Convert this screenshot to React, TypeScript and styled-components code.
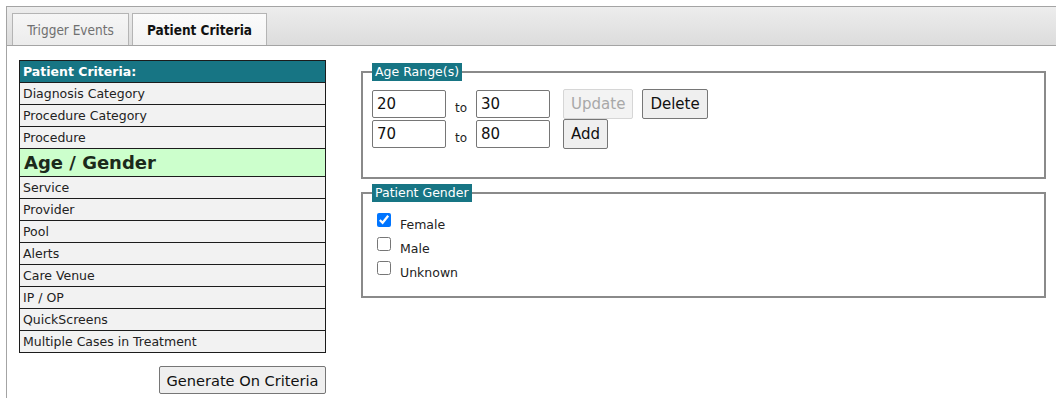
import React from 'react';
import styled, { createGlobalStyle } from 'styled-components';

const GlobalStyle = createGlobalStyle`
  html, body {
    margin: 0;
    background: #fff;
  }
  body {
    font-family: 'DejaVu Sans', Verdana, sans-serif;
    color: #222;
  }
`;

const teal = '#177584';

const Page = styled.div`
  box-sizing: border-box;
  height: 398px;
  padding: 6px 0 0 6px;
  overflow: hidden;
`;

const Panel = styled.div`
  height: 100%;
  border-top: 1px solid #a4a4a4;
  border-left: 1px solid #a4a4a4;
`;

const TabBar = styled.div`
  display: flex;
  align-items: flex-end;
  gap: 3px;
  box-sizing: border-box;
  height: 39px;
  padding-left: 5px;
  background: linear-gradient(#ededed, #dcdcdc);
  border-bottom: 1px solid #a4a4a4;
`;

const Tab = styled.div<{ $active?: boolean; $width: number }>`
  display: flex;
  align-items: center;
  justify-content: center;
  box-sizing: border-box;
  width: ${p => p.$width}px;
  height: 32px;
  border: 1px solid #b4b4b4;
  border-bottom: none;
  background: ${p => (p.$active ? 'linear-gradient(#fbfbfb, #f3f3f3)' : 'linear-gradient(#f6f6f6, #ececec)')};
  font-family: 'DejaVu Sans Condensed', 'DejaVu Sans', sans-serif;
  font-size: 13.5px;
  font-weight: ${p => (p.$active ? 700 : 400)};
  color: ${p => (p.$active ? '#111' : '#707070')};
`;

const Content = styled.div`
  display: flex;
  align-items: flex-start;
  gap: 35px;
  padding: 14px 10px 0 12px;
`;

const LeftColumn = styled.div`
  display: flex;
  flex-direction: column;
  align-items: flex-end;
  width: 307px;
  flex: none;
`;

const CriteriaList = styled.div`
  align-self: stretch;
  border: 1px solid #1c1c1c;
`;

const ListHeader = styled.div`
  height: 21px;
  line-height: 21px;
  padding-left: 3px;
  background: ${teal};
  color: #fff;
  font-size: 12.5px;
  font-weight: 700;
`;

const ListItem = styled.div<{ $selected?: boolean }>`
  height: ${p => (p.$selected ? 27 : 21)}px;
  line-height: ${p => (p.$selected ? 27 : 21)}px;
  padding-left: ${p => (p.$selected ? 4 : 3)}px;
  border-top: 1px solid #1c1c1c;
  background: ${p => (p.$selected ? '#ccffcc' : '#f2f2f2')};
  font-size: ${p => (p.$selected ? 18 : 12.5)}px;
  font-weight: ${p => (p.$selected ? 700 : 400)};
  color: ${p => (p.$selected ? '#1b2a1b' : '#222')};
  white-space: nowrap;
`;

const Button = styled.button<{ $height?: number }>`
  box-sizing: border-box;
  height: ${p => p.$height ?? 30}px;
  padding: 0 7px;
  border: 1px solid #767676;
  border-radius: 2px;
  background: #efefef;
  color: #111;
  font-family: 'DejaVu Sans', Verdana, sans-serif;
  font-size: 15px;
  white-space: nowrap;

  &:disabled {
    border-color: #d6d6d6;
    background: #f3f3f3;
    color: #a8a8a8;
  }
`;

const GenerateButton = styled(Button)`
  width: 167px;
  margin-top: 13px;
  padding: 0;
  font-size: 14.6px;
`;

const RightColumn = styled.div`
  flex: 1;
  display: flex;
  flex-direction: column;
  gap: 5px;
  padding-top: 3px;
`;

const Group = styled.fieldset<{ $bottom: number }>`
  margin: 0;
  padding: 8px 9px ${p => p.$bottom}px 9px;
  border: 2px solid #8a8a8a;
  min-width: 0;
`;

const Legend = styled.legend`
  padding: 0 3px;
  margin: 0;
  height: 18px;
  line-height: 18px;
  background: ${teal};
  color: #fff;
  font-size: 12.5px;
`;

const RangeRow = styled.div`
  display: flex;
  align-items: center;
  height: 30px;
`;

const NumberInput = styled.input`
  box-sizing: border-box;
  width: 74px;
  height: 28px;
  padding: 0 4px;
  border: 1px solid #767676;
  border-radius: 2px;
  font-family: 'DejaVu Sans', Verdana, sans-serif;
  font-size: 15px;
  color: #111;
`;

const ToLabel = styled.span`
  margin: 0 9px;
  padding-top: 7px;
  font-size: 12px;
  color: #222;
`;

const Actions = styled.div`
  display: flex;
  gap: 9px;
  margin-left: 13px;
`;

const Option = styled.label`
  display: flex;
  align-items: flex-start;
  height: 24px;
  font-size: 12.5px;
  color: #222;
`;

const Check = styled.input`
  width: 14px;
  height: 14px;
  margin: 3px 9px 0 5px;
`;

const OptionText = styled.span`
  margin-top: 6px;
  line-height: 18px;
`;

const criteria = [
  'Diagnosis Category',
  'Procedure Category',
  'Procedure',
  'Age / Gender',
  'Service',
  'Provider',
  'Pool',
  'Alerts',
  'Care Venue',
  'IP / OP',
  'QuickScreens',
  'Multiple Cases in Treatment',
];

const ranges = [
  { from: '20', to: '30', saved: true },
  { from: '70', to: '80', saved: false },
];

const genders = [
  { label: 'Female', checked: true },
  { label: 'Male', checked: false },
  { label: 'Unknown', checked: false },
];

export default function App () {
  return (
    <>
      <GlobalStyle />
      <Page>
        <Panel>
          <TabBar>
            <Tab $width={117}>Trigger Events</Tab>
            <Tab
              $active
              $width={135}
            >
              Patient Criteria
            </Tab>
          </TabBar>
          <Content>
            <LeftColumn>
              <CriteriaList>
                <ListHeader>Patient Criteria:</ListHeader>
                {criteria.map((name) => (
                  <ListItem
                    $selected={name === 'Age / Gender'}
                    key={name}
                  >
                    {name}
                  </ListItem>
                ))}
              </CriteriaList>
              <GenerateButton $height={28}>Generate On Criteria</GenerateButton>
            </LeftColumn>
            <RightColumn>
              <Group $bottom={28}>
                <Legend>Age Range(s)</Legend>
                {ranges.map((r) => (
                  <RangeRow key={r.from}>
                    <NumberInput defaultValue={r.from} />
                    <ToLabel>to</ToLabel>
                    <NumberInput defaultValue={r.to} />
                    <Actions>
                      {r.saved
                        ? (
                          <>
                            <Button disabled>Update</Button>
                            <Button>Delete</Button>
                          </>
                        )
                        : <Button>Add</Button>}
                    </Actions>
                  </RangeRow>
                ))}
              </Group>
              <Group $bottom={14}>
                <Legend>Patient Gender</Legend>
                {genders.map((g) => (
                  <Option key={g.label}>
                    <Check
                      defaultChecked={g.checked}
                      type='checkbox'
                    />
                    <OptionText>{g.label}</OptionText>
                  </Option>
                ))}
              </Group>
            </RightColumn>
          </Content>
        </Panel>
      </Page>
    </>
  );
}
